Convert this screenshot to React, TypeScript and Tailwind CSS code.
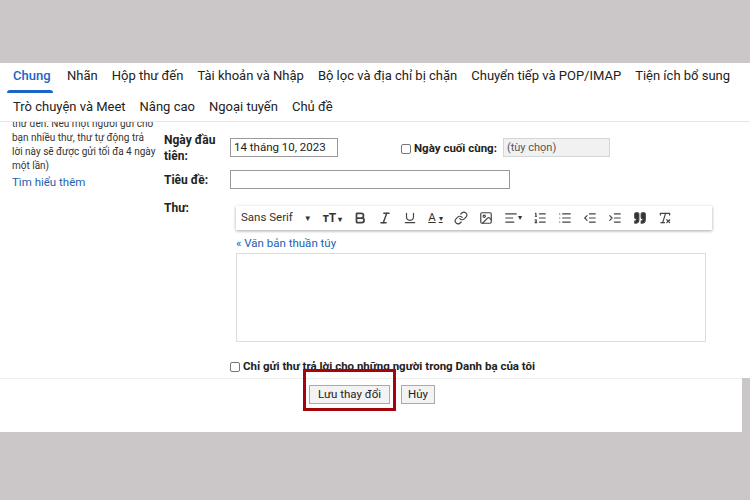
import { Bold, Italic, Underline, Link, Image, AlignLeft, ListOrdered, List, IndentDecrease, IndentIncrease, Quote, RemoveFormatting } from 'lucide-react';

const tabs1 = ['Nhãn', 'Hộp thư đến', 'Tài khoản và Nhập', 'Bộ lọc và địa chỉ bị chặn', 'Chuyển tiếp và POP/IMAP', 'Tiện ích bổ sung'];
const tabs2 = ['Trò chuyện và Meet', 'Nâng cao', 'Ngoại tuyến', 'Chủ đề'];

export default function App() {
  const ic = 'w-[14px] h-[14px] text-[#444]';
  return (
    <div className="w-[750px] h-[500px] bg-[#cbc7c8] flex flex-col text-[#222]" style={{ fontFamily: 'Roboto, "Liberation Sans", sans-serif' }}>
      <div className="h-[63px] shrink-0" />
      <div className="h-[369px] bg-white flex flex-col relative">
        {/* tabs */}
        <div className="flex items-end gap-[14px] pl-[13px] h-[30px] text-[13px]">
          <div className="flex flex-col items-start">
            <span className="text-[#1a63c7] font-medium">Chung</span>
            <div className="h-[3px] w-[46px] bg-[#1a63c7] mt-[5px] -ml-[6px] rounded-t" />
          </div>
          {tabs1.map(t => <span key={t} className="pb-[8px]">{t}</span>)}
        </div>
        <div className="border-b border-[#e6e6e6] flex gap-[14px] pl-[13px] h-[29px] items-center text-[13px]">
          {tabs2.map(t => <span key={t}>{t}</span>)}
        </div>
        {/* content */}
        <div className="flex flex-1 overflow-hidden">
          <div className="w-[164px] shrink-0 pl-[12px] pr-[8px] text-[10px] leading-[14px] text-[#333] -mt-[5px]">
            <p>thư đến. Nếu một người gửi cho bạn nhiều thư, thư tự động trả lời này sẽ được gửi tối đa 4 ngày một lần)</p>
            <p className="text-[#1a5fb4] text-[11.5px] mt-[2px]">Tìm hiểu thêm</p>
          </div>
          <div className="flex-1 pt-[10px] text-[12px]">
            <div className="flex items-start">
              <div className="w-[66px] font-bold leading-[16px]">Ngày đầu<br />tiên:</div>
              <div className="mt-[6px] w-[108px] h-[19px] border border-[#999] px-[3px] text-[11.5px] leading-[17px]">14 tháng 10, 2023</div>
              <div className="ml-[63px] mt-[8px] flex items-center gap-[3px] font-bold text-[11.5px]">
                <span className="w-[10px] h-[10px] border border-[#777] rounded-[2px]" />Ngày cuối cùng:
              </div>
              <div className="ml-[6px] mt-[6px] w-[107px] h-[19px] bg-[#f1f1f1] border border-[#d5d5d5] px-[3px] text-[11px] leading-[17px] text-[#555]">(tùy chọn)</div>
            </div>
            <div className="flex items-center mt-[6px]">
              <div className="w-[66px] font-bold">Tiêu đề:</div>
              <div className="w-[280px] h-[19px] border border-[#999]" />
            </div>
            <div className="flex items-start mt-[10px]">
              <div className="w-[72px] font-bold">Thư:</div>
              <div className="flex flex-col mt-[7px]">
                <div className="w-[476px] h-[24px] flex items-center gap-[11px] px-[5px] shadow-[0_1px_3px_rgba(0,0,0,0.35)] text-[11.5px] text-[#333]">
                  <span>Sans Serif <span className="ml-[8px] text-[8px]">▼</span></span>
                  <span className="font-bold text-[12px]">тT<span className="text-[8px] ml-[2px]">▾</span></span>
                  <Bold className={ic} strokeWidth={3} /><Italic className={ic} strokeWidth={2.5} /><Underline className={ic} />
                  <span className="underline">A<span className="text-[8px] ml-[3px] no-underline">▾</span></span>
                  <Link className={ic} /><Image className={ic} />
                  <span className="flex items-center"><AlignLeft className={ic} /><span className="text-[8px]">▾</span></span>
                  <ListOrdered className={ic} /><List className={ic} /><IndentDecrease className={ic} /><IndentIncrease className={ic} />
                  <Quote className={ic} fill="#333" /><RemoveFormatting className={ic} />
                </div>
                <span className="text-[#1a5fb4] text-[11.5px] mt-[5px]">« Văn bản thuần túy</span>
                <div className="w-[470px] h-[89px] border border-[#ddd] mt-[1px]" />
              </div>
            </div>
            <div className="flex items-center gap-[3px] ml-[66px] mt-[16px] font-bold text-[11.5px]">
              <span className="w-[10px] h-[10px] border border-[#777] rounded-[2px]" />Chỉ gửi thư trả lời cho những người trong Danh bạ của tôi
            </div>
          </div>
        </div>
        <div className="border-t border-[#eee] h-[54px] shrink-0 flex items-start pl-[303px] gap-[5px] mr-[6px] relative">
          <div className="-mt-[10px] border-[3px] border-[#a5050a] pt-[13px] pb-[4px] px-[3px] flex">
            <button className="border border-[#aaa] bg-[#f3f3f3] px-[8px] h-[19px] text-[11.5px]">Lưu thay đổi</button>
          </div>
          <button className="mt-[6px] border border-[#aaa] bg-[#f3f3f3] px-[6px] h-[19px] text-[11.5px]">Hủy</button>
        </div>
        <div className="absolute right-0 bottom-0 w-[8px] h-[54px] bg-[#cbc7c8]" />
      </div>
    </div>
  );
}
